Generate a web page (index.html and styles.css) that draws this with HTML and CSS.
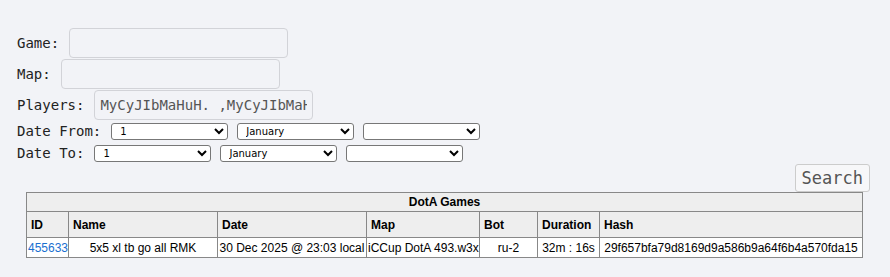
FILE: index.html
```html
<!DOCTYPE html>
<html>
  <head>
    <meta charset="utf-8" />
    <title>DotA Games</title>
    <link rel="stylesheet" href="styles.css">
  </head>
  <body>
    <form class="search">
      <div class="row field">
        <label>Game:</label>
        <input type="text" class="text" value="">
      </div>
      <div class="row field">
        <label>Map:</label>
        <input type="text" class="text" value="">
      </div>
      <div class="row field">
        <label>Players:</label>
        <input type="text" class="text" value="MyCyJIbMaHuH._,MyCyJIbMaHuH._">
      </div>
      <div class="row date">
        <label>Date From:</label>
        <select class="day"><option>1</option></select>
        <select class="month"><option>January</option></select>
        <select class="year"><option></option></select>
      </div>
      <div class="row date">
        <label>Date To:</label>
        <select class="day"><option>1</option></select>
        <select class="month"><option>January</option></select>
        <select class="year"><option></option></select>
      </div>
      <div class="actions">
        <button type="button">Search</button>
      </div>
    </form>
    <table class="games">
      <colgroup>
        <col class="c-id"><col class="c-name"><col class="c-date"><col class="c-map">
        <col class="c-bot"><col class="c-dur"><col class="c-hash">
      </colgroup>
      <thead>
        <tr><th colspan="7" class="title">DotA Games</th></tr>
        <tr class="head">
          <th>ID</th><th>Name</th><th>Date</th><th>Map</th><th>Bot</th><th>Duration</th><th>Hash</th>
        </tr>
      </thead>
      <tbody>
        <tr>
          <td><a href="#455633">455633</a></td>
          <td>5x5 xl tb go all RMK</td>
          <td>30 Dec 2025 @ 23:03 local</td>
          <td>iCCup DotA 493.w3x</td>
          <td>ru-2</td>
          <td>32m : 16s</td>
          <td>29f657bfa79d8169d9a586b9a64f6b4a570fda15</td>
        </tr>
      </tbody>
    </table>
  </body>
</html>
```

FILE: styles.css
```css
html { background-color: #f2f3f7; }

body {
  margin: 0;
  padding: 27px 0 0 17px;
  font-family: "DejaVu Sans Mono", monospace;
  font-size: 14px;
  color: #222;
}

.search {
  width: 852px;
}

.row {
  display: flex;
  align-items: center;
}
.row label {
  margin-right: 10px;
}

.field {
  height: 31px;
}
.field .text {
  box-sizing: border-box;
  width: 219px;
  height: 30px;
  margin: 0;
  padding: 0 5px;
  border: 1px solid #d2d3d8;
  border-radius: 4px;
  background-color: #f2f3f7;
  font-family: "DejaVu Sans Mono", monospace;
  font-size: 14px;
  line-height: 26px;
  color: #555;
}

.date {
  height: 22px;
}
.date select {
  box-sizing: border-box;
  width: 117px;
  height: 17px;
  margin: 0 9px 0 0;
  padding: 0 0 0 4px;
  border: 1px solid #777;
  border-radius: 3px;
  background-color: #fff;
  font-family: "DejaVu Sans", sans-serif;
  font-size: 10px;
  color: #000;
}

.actions {
  display: flex;
  justify-content: flex-end;
}
.actions button {
  height: 28px;
  margin-right: -1px;
  padding: 0 6px;
  border: 1px solid #ccc;
  border-radius: 3px;
  background-color: #f7f7f9;
  font-family: "DejaVu Sans Mono", monospace;
  font-size: 17px;
  color: #555;
}

.games {
  margin: 0 0 0 9px;
  width: 836px;
  table-layout: fixed;
  border-collapse: collapse;
  font-family: "Liberation Sans", Arial, sans-serif;
  font-size: 12px;
  line-height: 14px;
  color: #000;
  background-color: #fff;
}
.games th, .games td {
  border: 1px solid #888;
  padding: 3px 1px 2px;
  text-align: center;
  white-space: nowrap;
  overflow: hidden;
}
.games th {
  background-color: #eee;
  text-align: left;
}
.games .title {
  text-align: center;
  padding: 2px;
}
.games .head th {
  padding: 6px 2px 5px 4px;
}
.games a {
  color: #1a6fd0;
  text-decoration: none;
}

.c-id { width: 42px; }
.c-name { width: 149px; }
.c-date { width: 149px; }
.c-map { width: 113px; }
.c-bot { width: 58px; }
.c-dur { width: 62px; }
.c-hash { width: 263px; }
```
